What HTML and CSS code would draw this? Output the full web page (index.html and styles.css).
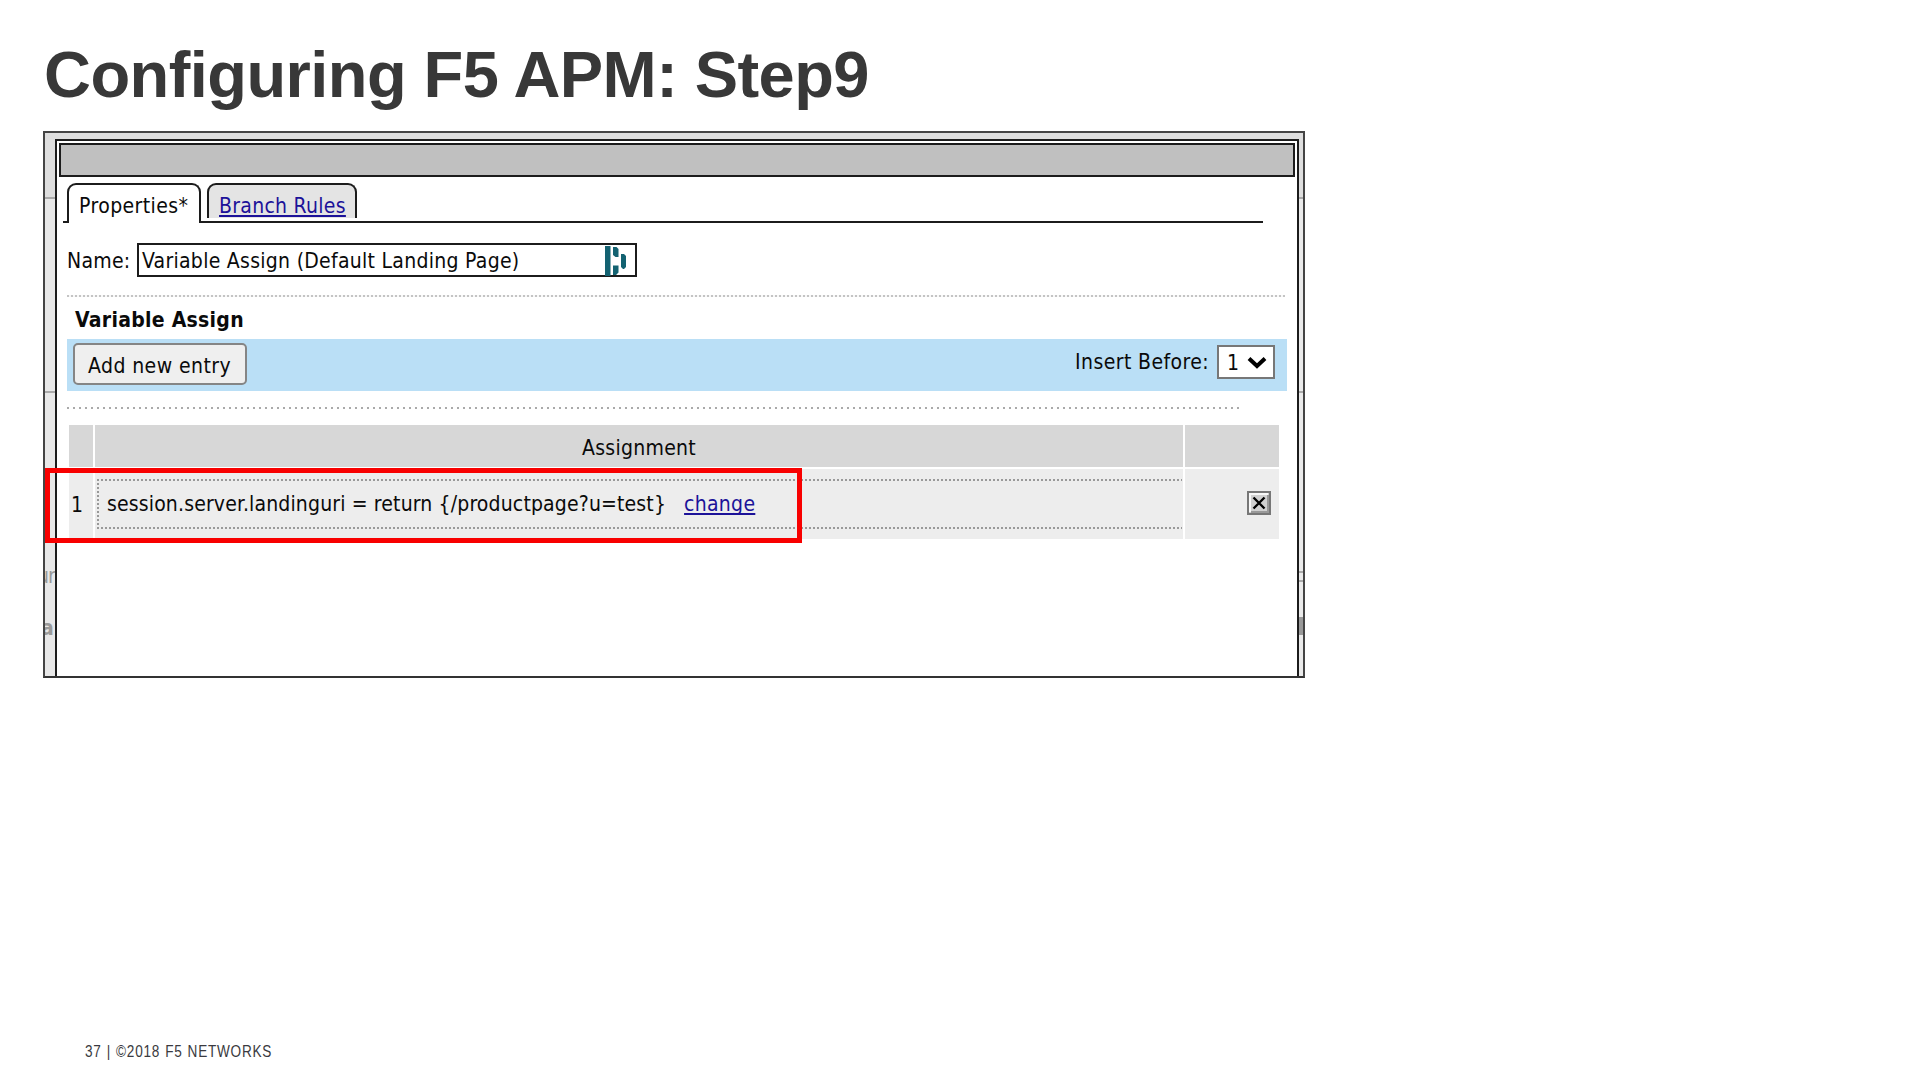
FILE: index.html
```html
<!DOCTYPE html>
<html lang="en">
<head>
<meta charset="utf-8">
<title>Configuring F5 APM</title>
<link rel="stylesheet" href="styles.css">
</head>
<body>
<main class="slide">
  <h1 class="title">Configuring F5 APM: Step9</h1>
  <section class="frame">
    <div class="gutter gutter-left"><span class="ghost ghost-ur">ur</span><span class="ghost ghost-a">a</span></div>
    <div class="dialog">
      <div class="titlebar"></div>
      <nav class="tabs">
        <div class="tab-foot"></div>
        <div class="tab tab-active"><span class="wide">Properties*</span></div>
        <div class="tab-rest"><div class="tab tab-idle"><a class="mid">Branch Rules</a></div></div>
      </nav>
      <div class="name-row">
        <label class="name-label"><span class="mid">Name:</span></label>
        <div class="name-input">
          <span class="mid">Variable Assign (Default Landing Page)</span>
          <svg class="badge" width="24" height="30" viewBox="0 0 24 30" fill="#136271">
            <rect x="0" y="0" width="5.5" height="30"/>
            <path d="M8 1h3.500l2 2v8h-3l-2.500-2zM8 19.500h5.500v7l-2.500 2.500h-3zM16 8h3l2 2v11l-2 2h-1l-2-2z"/>
          </svg>
        </div>
      </div>
      <div class="dots dots-light"></div>
      <h2 class="section"><span class="mid">Variable Assign</span></h2>
      <div class="toolbar">
        <div class="add"><span class="wide">Add new entry</span></div>
        <div class="insert"><span class="wide">Insert Before:</span></div>
        <div class="select"><span>1</span>
          <svg width="20" height="14" viewBox="0 0 20 14" fill="none" stroke="#000" stroke-width="4"><path d="M2 2.500l8 7.500 8-7.500"/></svg>
        </div>
      </div>
      <div class="dots dots-wide"></div>
      <div class="grid">
        <div class="head"></div>
        <div class="head"><span class="mid">Assignment</span></div>
        <div class="head"></div>
        <div class="cell num"><span>1</span></div>
        <div class="cell"><div class="expr"><span class="slight">session.server.landinguri = return {/productpage?u=test}</span><a class="mid">change</a></div></div>
        <div class="cell action">
          <svg width="24" height="24" viewBox="0 0 24 24">
            <rect x="1" y="1" width="22" height="22" fill="#d0d0d0" stroke="#777" stroke-width="2"/>
            <path d="M3 21V3h18" fill="none" stroke="#f8f8f8" stroke-width="2"/>
            <path d="M21 4v17H4" fill="none" stroke="#999" stroke-width="2"/>
            <path d="M6.500 6.500l11 11M17.500 6.500l-11 11" stroke="#000" stroke-width="2.400"/>
          </svg>
        </div>
      </div>
    </div>
    <div class="gutter gutter-right"></div>
    <div class="highlight"></div>
  </section>
  <footer class="footer"><span class="narrow">37 | ©2018 F5 NETWORKS</span></footer>
</main>
</body>
</html>
```
FILE: styles.css
```css
* { box-sizing: border-box; }
body { margin: 0; background: #fff; }
.slide {
  width: 1920px; height: 1080px; overflow: hidden;
  display: flex; flex-direction: column; align-items: flex-start;
  font: 21px/26px "DejaVu Sans Condensed", "DejaVu Sans", sans-serif;
  font-stretch: condensed;
  color: #0a0a0a;
}
.slide span, .slide a { white-space: nowrap; }
.slight { letter-spacing: 0.15px; }
.mid { letter-spacing: 0.28px; }
.wide { letter-spacing: 0.42px; }
a { color: #1c1299; text-decoration: underline; text-decoration-thickness: 2px; text-underline-offset: 2px; text-decoration-skip-ink: none; }

.title {
  margin: 0; height: 131px; padding: 37px 0 0 44px;
  font: bold 65px/75px "Liberation Sans", Arial, sans-serif;
  font-stretch: normal;
  letter-spacing: -0.56px;
  color: #383838;
}

.frame {
  position: relative;
  display: flex; width: 1262px; height: 547px;
  margin-left: 43px;
  border: 2px solid #444; border-bottom-color: #333;
  padding-top: 6px; background: #dedede;
}
.gutter { overflow: hidden; }
.gutter-left {
  width: 10px;
  background: linear-gradient(#dedede 0 58px, #aaa 58px 60px, #e8e8e8 60px 252px, #aaa 252px 254px, #e8e8e8 254px);
}
.gutter-right {
  width: 4px;
  background: linear-gradient(#dedede 0 58px, #aaa 58px 60px, #eaeaea 60px 252px, #aaa 252px 254px, #eaeaea 254px 432px, #aaa 432px 434px, #eaeaea 434px 441px, #aaa 441px 443px, #eaeaea 443px 478px, #999 478px 496px, #eaeaea 496px);
}
.ghost { display: block; color: #9a9a9a; line-height: 26px; }
.ghost-ur { margin: 424px 0 0 -8px; letter-spacing: -1px; }
.ghost-a { margin: 26px 0 0 -4px; font-weight: bold; }

.dialog {
  width: 1244px; background: #fff;
  border: solid #1c1c1c; border-width: 2px 2px 0;
}
.titlebar { margin: 2px 2px 0; height: 34px; background: #c0c0c0; border: 2px solid #1c1c1c; }

.tabs { display: flex; height: 40px; margin: 6px 34px 0 6px; }
.tab-foot { width: 4px; border-bottom: 2px solid #1c1c1c; }
.tab { border: 2px solid #1c1c1c; border-bottom: 0; border-radius: 9px 9px 0 0; padding: 8px 0 0 10px; }
.tab-active { width: 134px; }
.tab-rest { flex: 1; border-bottom: 2px solid #1c1c1c; }
.tab-idle { width: 150px; height: 35px; margin-left: 6px; background: #e4e4e4; padding-left: 10px; }

.name-row { display: flex; height: 34px; margin: 20px 0 0 10px; }
.name-label { width: 70px; padding-top: 5px; }
.name-input { display: flex; justify-content: space-between; width: 500px; border: 2px solid #1c1c1c; padding: 3px 6px 0 3px; }
.badge { margin-top: -2px; }

.dots { height: 2px; }
.dots-light { width: 1218px; margin: 18px 0 0 10px; background: repeating-linear-gradient(90deg, #c4c4c4 0 2px, #f8f8f8 2px 4px); }
.dots-wide { width: 1174px; margin: 16px 0 0 10px; background: repeating-linear-gradient(90deg, #aaa 0 2px, #fff 2px 6px); }
.section { margin: 0; height: 42px; padding: 10px 0 0 18px; font: inherit; font-weight: bold; }

.toolbar { display: flex; width: 1220px; height: 52px; margin-left: 10px; padding: 4px 12px 0 6px; background: #badff6; }
.add { width: 174px; height: 42px; background: #efefef; border: 2px solid #858585; border-radius: 5px; padding: 8px 0 0 13px; }
.insert { margin-left: auto; width: 142px; padding-top: 6px; }
.select { display: flex; justify-content: space-between; width: 58px; height: 34px; margin-top: 2px; background: #fff; border: 2px solid #777; padding: 3px 6px 0 8px; }
.select svg { margin-top: 6px; }

.grid { display: grid; grid-template: 42px 70px / 24px 1088px 94px; gap: 2px; margin: 16px 0 0 12px; }
.head { background: #d7d7d7; padding-top: 10px; text-align: center; }
.cell { background: #ededed; }
.num { padding: 23px 0 0 2px; }
.expr {
  display: flex; gap: 18px; width: 1085px; height: 50px; margin: 10px 0 0 2px; padding: 12px 0 0 10px;
  background:
    repeating-linear-gradient(90deg, #999 0 2px, transparent 2px 4px) 0 0 / 100% 2px no-repeat,
    repeating-linear-gradient(90deg, #999 0 2px, transparent 2px 4px) 0 100% / 100% 2px no-repeat,
    repeating-linear-gradient(180deg, #999 0 2px, transparent 2px 4px) 0 0 / 2px 100% no-repeat;
}
.action { padding: 22px 0 0 62px; }

.highlight { position: absolute; left: 0; top: 335px; width: 757px; height: 75px; border: 5px solid #f80000; }

.footer {
  margin-top: auto; height: 40px; padding: 1px 0 0 85px;
  font: 16.500px/20px "Liberation Sans", Arial, sans-serif;
  font-stretch: normal;
  letter-spacing: 0.900px; word-spacing: 0.700px; color: #3a3a40;
}
.narrow { display: inline-block; transform: scaleX(0.824); transform-origin: 0 50%; }
```
